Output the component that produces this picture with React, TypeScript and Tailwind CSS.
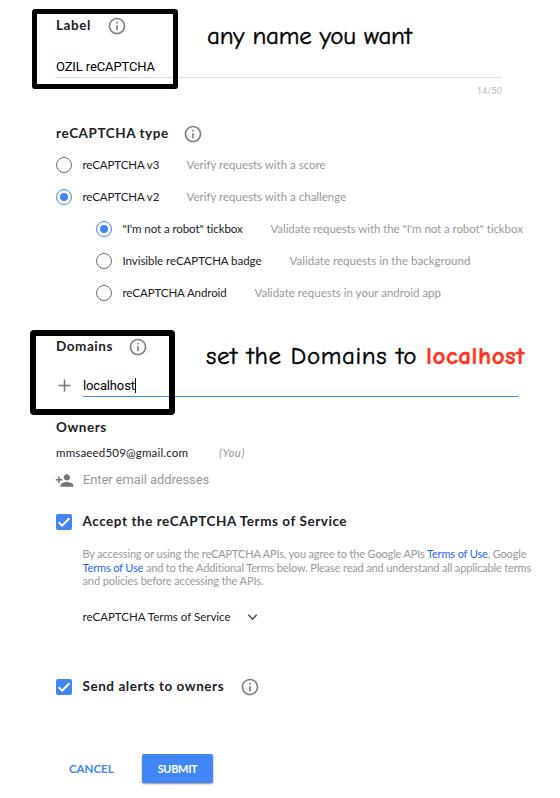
import React from "react";

const sans = "font-['Lato',sans-serif]";
const roboto = "font-['Roboto',sans-serif]";
const comic = "font-['Comic_Sans_MS','Comic_Neue','Noto_Sans',sans-serif] text-[25px] leading-8";

function Info({ className = "" }: { className?: string }) {
  return (
    <svg className={`h-5 w-5 shrink-0 ${className}`} viewBox="0 0 24 24" fill="#808080">
      <path d="M11 17h2v-6h-2v6zm1-15C6.48 2 2 6.48 2 12s4.48 10 10 10 10-4.48 10-10S17.52 2 12 2zm0 18c-4.41 0-8-3.59-8-8s3.59-8 8-8 8 3.59 8 8-3.59 8-8 8zM11 9h2V7h-2v2z" />
    </svg>
  );
}

function Radio({ on = false }: { on?: boolean }) {
  return (
    <span className={`flex h-4 w-4 shrink-0 items-center justify-center rounded-full border ${on ? "border-[#4285f4]" : "border-[#6b6b6b]"}`}>
      {on && <span className="h-2 w-2 rounded-full bg-[#4285f4]" />}
    </span>
  );
}

function Check() {
  return (
    <span className="flex h-4 w-4 shrink-0 items-center justify-center rounded-[2px] bg-[#4285f4]">
      <svg className="h-4 w-4" viewBox="0 0 16 16" fill="none" stroke="#fff" strokeWidth="2">
        <path d="M2.7 8.2 6.2 11.6 13.4 4.2" />
      </svg>
    </span>
  );
}

function Option({ label, hint, on, labelClass, hintClass }: { label: string; hint: string; on?: boolean; labelClass: string; hintClass: string }) {
  return (
    <div className="flex h-8 items-center">
      <Radio on={on} />
      <span className={`ml-[10.5px] shrink-0 text-[#202124] ${labelClass}`}>{label}</span>
      <span className={`shrink-0 text-[#999] ${hintClass}`}>{hint}</span>
    </div>
  );
}

const heading = "shrink-0 text-[13.5px] font-bold tracking-[0.55px] text-[#202124]";

export default function App() {
  return (
    <div className={`relative h-[798px] w-[560px] overflow-hidden whitespace-nowrap bg-white pl-14 ${sans} text-[11.5px]`}>
      <section className="h-[117px] pt-4">
        <div className="flex h-5 items-center">
          <h2 className={`${heading} -mt-0.5 w-[51px]`}>Label</h2>
          <Info />
        </div>
        <div className={`mt-[18px] flex h-6 w-[446px] items-center border-b border-[#dcdcdc] pt-[2px] text-[13px] tracking-[-0.12px] text-black ${roboto}`}>
          <span>OZIL reCAPTCHA</span>
        </div>
        <div className={`mt-[6px] w-[446px] text-right text-[9.5px] leading-[14px] text-[#bdbdbd] ${roboto}`}>14/50</div>
      </section>

      <section className="h-[219px] pt-[7px]">
        <div className="flex h-5 items-center">
          <h2 className={`${heading} -mt-0.5 w-[127px] tracking-[0.5px]`}>reCAPTCHA type</h2>
          <Info />
        </div>
        <div className="mt-[5px]">
          <Option label="reCAPTCHA v3" hint="Verify requests with a score" labelClass="w-[104px] tracking-[-0.1px]" hintClass="" />
          <Option label="reCAPTCHA v2" hint="Verify requests with a challenge" on labelClass="w-[104px] tracking-[-0.1px]" hintClass="" />
          <div className="pl-10">
            <Option label={'"I\'m not a robot" tickbox'} hint={'Validate requests with the "I\'m not a robot" tickbox'} on labelClass="w-[148px] tracking-[-0.08px]" hintClass="tracking-[-0.07px]" />
            <Option label="Invisible reCAPTCHA badge" hint="Validate requests in the background" labelClass="w-[167px] tracking-[-0.05px]" hintClass="tracking-[0.02px]" />
            <Option label="reCAPTCHA Android" hint="Validate requests in your android app" labelClass="w-[132px] tracking-[-0.08px]" hintClass="" />
          </div>
        </div>
      </section>

      <section className="h-[81px] pt-px">
        <div className="flex h-5 items-center">
          <h2 className={`${heading} -mt-0.5 w-[72px]`}>Domains</h2>
          <Info />
        </div>
        <div className="mt-4 flex h-6 items-center">
          <svg className="mr-[10px] h-[17px] w-[17px]" viewBox="0 0 17 17" stroke="#777" strokeWidth="1.5">
            <path d="M2.5 8.5h12M8.5 2.5v12" />
          </svg>
          <div className={`flex h-6 w-[435px] items-center border-b border-[#4285f4] pt-[2px] text-[13px] tracking-[-0.15px] text-black ${roboto}`}>
            <span>localhost</span>
            <span className="h-[15px] w-px bg-black" />
          </div>
        </div>
      </section>

      <section className="h-[92px]">
        <h2 className={`${heading} h-5 leading-5`}>Owners</h2>
        <div className="mt-[6px] flex h-5 items-center">
          <span className="w-[163px] tracking-[0.18px] text-[#202124]">mmsaeed509@gmail.com</span>
          <span className="italic tracking-[0.45px] text-[#999]">(You)</span>
        </div>
        <div className="mt-[7px] flex h-5 items-center">
          <svg className="-ml-[1px] mr-[9px] h-[19px] w-[19px]" viewBox="0 0 24 24" fill="#757575">
            <path d="M15 12c2.21 0 4-1.79 4-4s-1.79-4-4-4-4 1.79-4 4 1.79 4 4 4zm-9-2V7H4v3H1v2h3v3h2v-3h3v-2H6zm9 4c-2.67 0-8 1.34-8 4v2h16v-2c0-2.66-5.33-4-8-4z" />
          </svg>
          <span className={`text-[13px] tracking-[-0.1px] text-[#999] ${roboto}`}>Enter email addresses</span>
        </div>
      </section>

      <section className="h-[168px] pt-[3px]">
        <div className="flex h-5 items-center">
          <Check />
          <h2 className={`${heading} -mt-0.5 ml-[10.5px]`}>Accept the reCAPTCHA Terms of Service</h2>
        </div>
        <p className="ml-[26.5px] mt-[15px] text-[11px] leading-[13.5px] tracking-[-0.155px] text-[#999]">
          By accessing or using the reCAPTCHA APIs, you agree to the Google APIs <a className="text-[#2962ff]">Terms of Use</a>, Google
          <br />
          <a className="text-[#2962ff]">Terms of Use</a> and to the Additional Terms below. Please read and understand all applicable terms
          <br />
          <span className="tracking-[-0.1px]">and policies before accessing the APIs.</span>
        </p>
        <div className="ml-[26.5px] mt-[19px] flex h-5 items-center text-[#202124]">
          <span className="w-[164px]">reCAPTCHA Terms of Service</span>
          <svg className="h-3 w-3" viewBox="0 0 12 12" fill="none" stroke="#555" strokeWidth="1.6">
            <path d="M1.3 3.8 5.5 8l4.2-4.2" />
          </svg>
        </div>
      </section>

      <section className="flex h-5 items-center">
        <Check />
        <h2 className={`${heading} -mt-0.5 ml-[10.5px] w-[157px]`}>Send alerts to owners</h2>
        <Info />
      </section>

      <footer className="mt-[57px] flex h-[29px] items-center text-[11.5px] font-bold">
        <button className="ml-[13px] w-[73px] text-left text-[#4285f4]">CANCEL</button>
        <button className="h-[29px] w-[71px] rounded-[2px] bg-[#4285f4] pt-px text-[11px] tracking-[-0.35px] text-white shadow-[0_1px_2px_rgba(0,0,0,0.45)]">SUBMIT</button>
      </footer>

      <div className="absolute left-8 top-[9px] h-[80px] w-[146px] rounded-[3px] border-[5px] border-black" />
      <div className="absolute left-[30px] top-[330px] h-[85px] w-[145px] rounded-[4px] border-[6px] border-black" />
      <div className={`absolute left-[207px] top-[20px] tracking-[-0.2px] text-black [-webkit-text-stroke:0.45px_#000] ${comic}`}>any name you want</div>
      <div className={`absolute left-[206px] top-[340px] tracking-[0.6px] text-black [-webkit-text-stroke:0.45px_#000] ${comic}`}>
        set the Domains to <b className="tracking-[0.55px] text-[#ff3322] [-webkit-text-stroke:0.45px_#ff3322]">localhost</b>
      </div>
    </div>
  );
}
